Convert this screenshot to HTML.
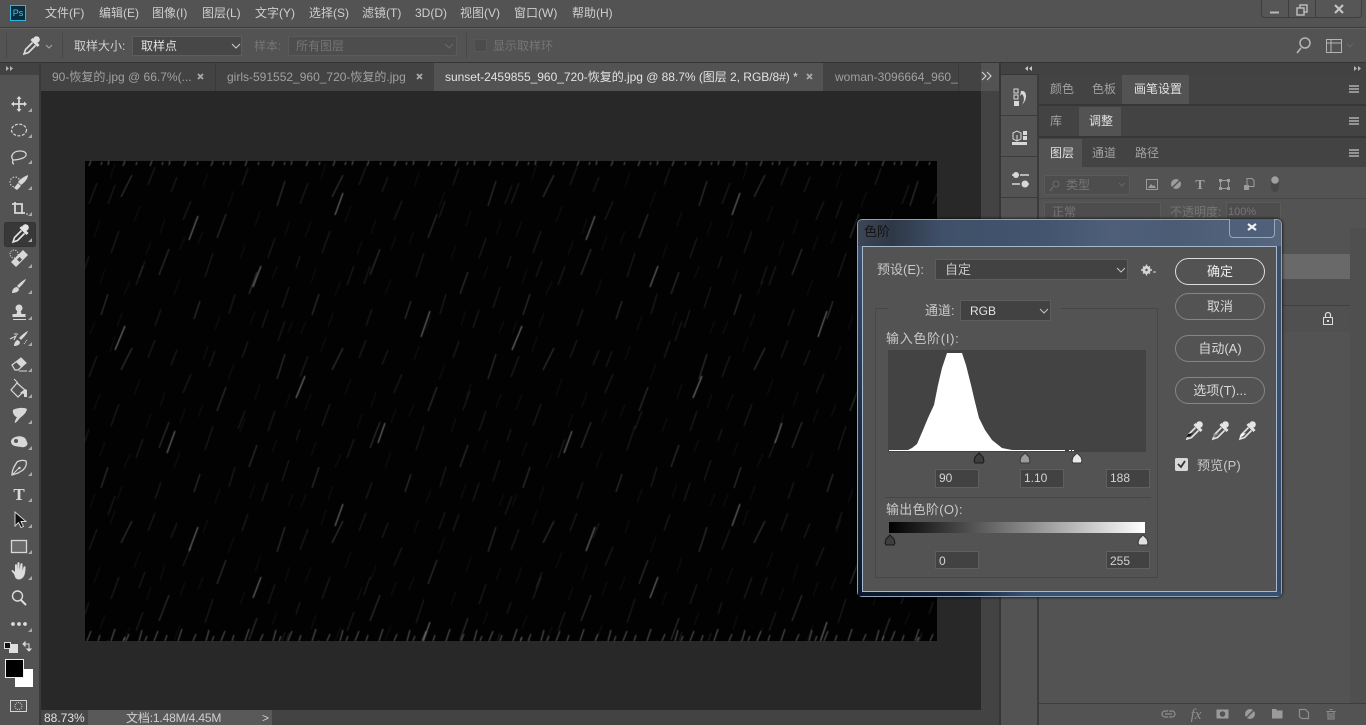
<!DOCTYPE html>
<html lang="zh"><head><meta charset="utf-8"><title>Photoshop</title>
<style>
html,body{margin:0;padding:0;width:1366px;height:725px;overflow:hidden;background:#535353}
body{position:relative;font:12px/1 "Liberation Sans","Noto Sans CJK SC",sans-serif;color:#cfcfcf}
.b{position:absolute;box-sizing:border-box}
.t{position:absolute;white-space:nowrap;line-height:14px;height:14px}
.d{color:#757575}.m{color:#a0a0a0}.w{color:#e2e2e2}
svg{position:absolute;left:0;top:0;overflow:visible}
.btn{position:absolute;box-sizing:border-box;left:1175px;width:90px;height:27px;border:1px solid #858585;border-radius:14px;text-align:center;line-height:25px;font-size:13px;color:#d8d8d8}
.inp{position:absolute;box-sizing:border-box;width:44px;height:19px;background:#424242;border:1px solid #5f5f5f;color:#d4d4d4;padding-left:3px;line-height:17px;font-size:12px}
.dl{font-size:13px;color:#c8c8c8}
.x{position:absolute;width:8px;height:8px}
</style></head><body>

<!-- top bars -->
<div class="b" style="left:0;top:27px;width:1366px;height:1px;background:#3c3c3c"></div>
<div class="b" style="left:0;top:28px;width:1366px;height:1px;background:#606060"></div>
<div class="b" style="left:0;top:62px;width:1366px;height:1px;background:#343434"></div>

<!-- Ps logo -->
<div class="b" style="left:10px;top:5px;width:16px;height:16px;background:#062c3f;border:1px solid #2fb5dc;color:#4fc8ee;font-size:9px;line-height:14px;text-align:center">Ps</div>

<div class="t" style="left:45px;top:6px">文件(F)</div>
<div class="t" style="left:99px;top:6px">编辑(E)</div>
<div class="t" style="left:152px;top:6px">图像(I)</div>
<div class="t" style="left:202px;top:6px">图层(L)</div>
<div class="t" style="left:255px;top:6px">文字(Y)</div>
<div class="t" style="left:309px;top:6px">选择(S)</div>
<div class="t" style="left:362px;top:6px">滤镜(T)</div>
<div class="t" style="left:415px;top:6px">3D(D)</div>
<div class="t" style="left:460px;top:6px">视图(V)</div>
<div class="t" style="left:514px;top:6px">窗口(W)</div>
<div class="t" style="left:572px;top:6px">帮助(H)</div>

<!-- window controls -->
<div class="b" style="left:1261px;top:-1px;width:101px;height:19px;border:1px solid #3e3e3e;border-radius:0 0 4px 4px;background:#565656"></div>
<div class="b" style="left:1288px;top:0;width:1px;height:18px;background:#3e3e3e"></div>
<div class="b" style="left:1315px;top:0;width:1px;height:18px;background:#3e3e3e"></div>

<!-- options bar -->
<div class="b" style="left:6px;top:33px;width:1px;height:25px;background:#484848"></div>
<div class="b" style="left:62px;top:33px;width:1px;height:25px;background:#484848"></div>
<div class="b" style="left:466px;top:33px;width:1px;height:25px;background:#484848"></div>
<div class="t" style="left:74px;top:39px">取样大小:</div>
<div class="b" style="left:132px;top:36px;width:110px;height:20px;background:#474747;border:1px solid #5d5d5d"></div>
<div class="t w" style="left:141px;top:39px">取样点</div>
<div class="t d" style="left:254px;top:39px">样本:</div>
<div class="b" style="left:288px;top:36px;width:169px;height:20px;background:#4d4d4d;border:1px solid #5a5a5a"></div>
<div class="t d" style="left:296px;top:39px">所有图层</div>
<div class="b" style="left:474px;top:39px;width:13px;height:13px;background:#4c4c4c;border:1px solid #585858"></div>
<div class="t d" style="left:493px;top:39px">显示取样环</div>

<!-- left toolbar head -->
<div class="b" style="left:0;top:63px;width:39px;height:12px;background:#424242"></div>
<div class="b" style="left:39px;top:63px;width:2px;height:662px;background:#3a3a3a"></div>

<!-- tabs -->
<div class="b" style="left:41px;top:63px;width:940px;height:28px;background:#434343"></div>
<div class="b" style="left:215px;top:63px;width:1px;height:28px;background:#393939"></div>
<div class="b" style="left:434px;top:63px;width:389px;height:28px;background:#535353"></div>
<div class="t m" style="left:52px;top:70px">90-恢复的.jpg @ 66.7%(...</div>
<div class="t m" style="left:227px;top:70px">girls-591552_960_720-恢复的.jpg</div>
<div class="t w" style="left:445px;top:70px;letter-spacing:-.03px">sunset-2459855_960_720-恢复的.jpg @ 88.7% (图层 2, RGB/8#) *</div>
<div class="b" style="left:823px;top:63px;width:135px;height:28px;overflow:hidden"><div class="t m" style="left:12px;top:7px">woman-3096664_960_720.jpg</div></div>
<div class="b" style="left:958px;top:63px;width:1px;height:28px;background:#393939"></div>

<!-- canvas area -->
<div class="b" style="left:41px;top:91px;width:940px;height:619px;background:#282828"></div>
<div class="b" style="left:981px;top:91px;width:18px;height:634px;background:#434343"></div>
<div class="b" style="left:999px;top:63px;width:2px;height:662px;background:#363636"></div>
<div class="b" style="left:41px;top:710px;width:940px;height:15px;background:#434343"></div>
<div class="b" style="left:41px;top:710px;width:47px;height:15px;background:#474747"></div>
<div class="b" style="left:88px;top:710px;width:184px;height:15px;background:#595959"></div>
<div class="t w" style="left:44px;top:711px">88.73%</div>
<div class="t" style="left:126px;top:711px;letter-spacing:-.15px">文档:1.48M/4.45M</div>
<div class="t" style="left:262px;top:711px;color:#cfcfcf">&gt;</div>

<!-- image with rain -->
<div class="b" style="left:85px;top:161px;width:852px;height:480px;background:#020202"></div>
<svg width="1366" height="725" viewBox="0 0 1366 725" style="filter:blur(.45px)">
<defs>
<pattern id="r1" width="211" height="173" patternUnits="userSpaceOnUse" patternTransform="translate(85 161)">
<path stroke="#fff" stroke-width=".9" stroke-opacity=".25" fill="none" d="M47 14l-11 22M141 53l-9 24M200 20l-8 25M84 88l-10 26M172 111l-8 22M23 133l-7 21M115 140l-6 18"/>
<path stroke="#fff" stroke-width=".9" stroke-opacity=".15" fill="none" d="M12 22l-8 21M70 6l-7 18M106 40l-8 19M163 7l-6 17M190 77l-7 20M34 70l-8 22M58 105l-7 19M128 92l-8 24M150 133l-6 20M204 126l-7 21M92 16l-6 15M76 148l-6 17M4 95l-6 18M183 149l-6 18"/>
<path stroke="#fff" stroke-width=".9" stroke-opacity=".08" fill="none" d="M30 3l-5 15M55 45l-6 16M80 58l-5 15M123 12l-5 14M149 30l-6 16M175 50l-5 15M15 60l-6 16M100 75l-5 14M45 120l-6 14M205 60l-5 14M160 84l-5 14M95 118l-6 16M135 155l-5 14M20 108l-5 14M192 105l-5 13M66 80l-5 14M118 70l-5 13M170 150l-5 14M37 152l-5 14M10 160l-5 13M208 160l-5 12"/>
</pattern>
<pattern id="r4" width="397" height="311" patternUnits="userSpaceOnUse" patternTransform="translate(85 161)">
<path stroke="#fff" stroke-width="1" stroke-opacity=".5" fill="none" d="M113 55l-9 24M258 32l-8 22M176 105l-8 21M345 150l-9 26M40 165l-10 24M220 215l-9 22M300 262l-7 20M90 270l-8 22"/>
<path stroke="#fff" stroke-width=".9" stroke-opacity=".14" fill="none" d="M30 24l-7 19M360 40l-6 17M200 160l-7 20M130 190l-6 16M285 105l-6 18M385 230l-7 19M160 250l-7 18M60 100l-6 16"/>
</pattern>
<pattern id="r2" width="61" height="12" patternUnits="userSpaceOnUse" patternTransform="translate(85 161)">
<path stroke="#fff" stroke-opacity=".42" stroke-width=".9" fill="none" d="M6 0l-2 5M17 1l-1 3M24 0l-1 4M40 0l-2 5M52 1l-1 3"/>
</pattern>
<pattern id="r3" width="67" height="14" patternUnits="userSpaceOnUse" patternTransform="translate(85 627)">
<path stroke="#fff" stroke-opacity=".42" stroke-width=".9" fill="none" d="M6 4l-4 10M15 8l-2 6M30 2l-4 12M44 7l-3 7M57 3l-3 11M62 9l-2 5"/>
</pattern>
</defs>
<rect x="85" y="161" width="852" height="480" fill="url(#r1)"/>
<rect x="85" y="161" width="852" height="480" fill="url(#r4)"/>
<rect x="85" y="161" width="852" height="6" fill="url(#r2)"/>
<rect x="85" y="627" width="852" height="14" fill="url(#r3)"/>
</svg>

<!-- right panels -->
<div class="b" style="left:1001px;top:63px;width:365px;height:11px;background:#424242"></div>
<div class="b" style="left:1001px;top:74px;width:37px;height:1px;background:#363636"></div>
<div class="b" style="left:1037px;top:74px;width:2px;height:651px;background:#3b3b3b"></div>
<div class="b" style="left:1001px;top:115px;width:36px;height:1px;background:#3c3c3c"></div>
<div class="b" style="left:1001px;top:156px;width:36px;height:1px;background:#3c3c3c"></div>
<div class="b" style="left:1001px;top:197px;width:36px;height:1px;background:#3c3c3c"></div>

<div class="b" style="left:1039px;top:74px;width:327px;height:30px;background:#434343"></div>
<div class="b" style="left:1122px;top:75px;width:67px;height:29px;background:#535353"></div>
<div class="t m" style="left:1050px;top:82px">颜色</div>
<div class="t m" style="left:1092px;top:82px">色板</div>
<div class="t w" style="left:1134px;top:82px">画笔设置</div>
<div class="b" style="left:1039px;top:104px;width:327px;height:2px;background:#373737"></div>
<div class="b" style="left:1039px;top:106px;width:327px;height:30px;background:#434343"></div>
<div class="b" style="left:1079px;top:107px;width:42px;height:29px;background:#535353"></div>
<div class="t m" style="left:1050px;top:114px">库</div>
<div class="t w" style="left:1089px;top:114px">调整</div>
<div class="b" style="left:1039px;top:136px;width:327px;height:2px;background:#373737"></div>
<div class="b" style="left:1039px;top:138px;width:327px;height:29px;background:#434343"></div>
<div class="b" style="left:1039px;top:139px;width:43px;height:28px;background:#535353"></div>
<div class="t w" style="left:1050px;top:146px">图层</div>
<div class="t m" style="left:1092px;top:146px">通道</div>
<div class="t m" style="left:1135px;top:146px">路径</div>
<div class="b" style="left:1039px;top:198px;width:327px;height:1px;background:#484848"></div>

<div class="b" style="left:1044px;top:175px;width:86px;height:20px;background:#4d4d4d;border:1px solid #5a5a5a;border-radius:2px"></div>
<div class="t d" style="left:1066px;top:178px">类型</div>
<div class="b" style="left:1044px;top:202px;width:117px;height:20px;background:#4d4d4d;border:1px solid #5a5a5a"></div>
<div class="t d" style="left:1052px;top:205px">正常</div>
<div class="t d" style="left:1170px;top:205px">不透明度:</div>
<div class="b" style="left:1226px;top:202px;width:55px;height:20px;background:#4d4d4d;border:1px solid #5a5a5a"></div>
<div class="t d" style="left:1228px;top:205px;font-size:11px">100%</div>

<!-- layer rows -->
<div class="b" style="left:1039px;top:254px;width:311px;height:25px;background:#696969"></div>
<div class="b" style="left:1039px;top:279px;width:311px;height:26px;background:#4f4f4f"></div>
<div class="b" style="left:1039px;top:305px;width:311px;height:1px;background:#404040"></div>
<div class="b" style="left:1039px;top:306px;width:311px;height:26px;background:#505050"></div>
<div class="b" style="left:1350px;top:228px;width:16px;height:475px;background:#4f4f4f"></div>
<div class="b" style="left:1039px;top:703px;width:327px;height:1px;background:#3e3e3e"></div>

<!-- base icons -->
<svg width="1366" height="725" viewBox="0 0 1366 725" fill="none" stroke="#cfcfcf">
<defs>
<g id="ed">
<path d="M1.500-7l7 7" stroke="currentColor" stroke-width="3" fill="none"/>
<circle cx="6.500" cy="-6.500" r="3.300" fill="currentColor" stroke="none"/>
<path d="M2.500-3.500l-7 7-1.500 4.500 4.500-1.500 7-7" stroke="currentColor" stroke-width="1.600" fill="none"/>
</g>
<path id="tri" d="M0 4h4v-4z" fill="#a9a9a9" stroke="none"/>
<g id="burger"><path d="M0 0h10M0 3h10M0 6h10" stroke="#c4c4c4" stroke-width="1.200"/></g>
</defs>

<!-- window glyphs -->
<path d="M1270 12.500h9" stroke="#b8b8b8" stroke-width="2"/>
<path d="M1297 8h7v7h-7zM1300 8v-3h7v7h-3" stroke="#b8b8b8" stroke-width="1.500"/>
<path d="M1335 5l8 8M1343 5l-8 8" stroke="#c4c4c4" stroke-width="2.200"/>

<!-- tab close marks -->
<g stroke="#a8a8a8" stroke-width="1.800">
<path d="M198 74l5 5M203 74l-5 5"/>
<path d="M417 74l5 5M422 74l-5 5"/>
<path d="M807 74l5 5M812 74l-5 5"/>
</g>

<!-- options -->
<use href="#ed" x="30" y="46" color="#dedede"/>
<path d="M46 45l3 3 3-3" stroke="#a5a5a5"/>
<path d="M232 44l4 4 4-4" stroke="#cfcfcf"/>
<path d="M445 44l4 4 4-4" stroke="#696969"/>
<circle cx="1305" cy="43" r="5" stroke="#b5b5b5" stroke-width="1.500"/><path d="M1301 48l-4 5" stroke="#b5b5b5" stroke-width="1.700"/>
<path d="M1326.500 39.500h15v13h-15zM1331 40v12M1327 43h14" stroke="#b5b5b5"/>
<path d="M1347 44l3 3 3-3" stroke="#666"/>

<!-- double arrows -->
<path d="M6 66l3 2.500-3 2.500zM10 66l3 2.500-3 2.500z" fill="#b5b5b5" stroke="none"/>
<path d="M1032 66l-3 2.500 3 2.500zM1028 66l-3 2.500 3 2.500z" fill="#c8c8c8" stroke="none"/>
<path d="M1354 66l3 2.500-3 2.500zM1358 66l3 2.500-3 2.500z" fill="#b5b5b5" stroke="none"/>
<path d="M982 72l4 4-4 4M987 72l4 4-4 4" stroke="#cfcfcf" stroke-width="1.200"/>

<!-- burgers -->
<use href="#burger" x="1349" y="86"/><use href="#burger" x="1349" y="118"/><use href="#burger" x="1349" y="150"/>

<!-- strip icons -->
<path d="M1014 89h4v4h-4zM1014 95h4v4h-4z" stroke="#d8d8d8"/><path d="M1014 101h5v5h-5z" fill="#d8d8d8" stroke="none"/>
<path d="M1021 91c6-1 7 8 1 14 3-5 2-9 0-11l-2 2z" fill="#d8d8d8" stroke="none"/>
<path d="M1013 133l4-2 4 2v6l-4 2-4-2zM1017 135v6" stroke="#d8d8d8"/>
<path d="M1023 131h4v4h-4zM1023 136h4v4h-4zM1012 142h15v3h-15z" fill="#d8d8d8" stroke="none"/>
<path d="M1012 175h7M1020 175h9M1012 184h8M1023 184h6" stroke="#d8d8d8" stroke-width="1.500"/>
<circle cx="1016" cy="175" r="3" fill="#d8d8d8" stroke="none"/><circle cx="1025" cy="184" r="3.500" fill="#d8d8d8" stroke="none"/>

<!-- layer filter icons -->
<circle cx="1056" cy="184" r="3" stroke="#6c6c6c"/><path d="M1053 187l-3 4" stroke="#6c6c6c" stroke-width="1.300"/>
<path d="M1125 183l-3 3-3-3" stroke="#666"/>
<path d="M1146.500 179.500h11v10h-11z" stroke="#9c9c9c"/><path d="M1148 188l3-4 2 2 1-1 2 3z" fill="#9c9c9c" stroke="none"/>
<circle cx="1176" cy="184" r="5" fill="#9c9c9c" stroke="none"/><path d="M1172 188l8-8" stroke="#535353" stroke-width="1.500"/>
<text x="1200" y="189" font-family="Liberation Serif" font-size="14" font-weight="bold" fill="#a0a0a0" stroke="none" text-anchor="middle">T</text>
<path d="M1220.500 180.500h8v8h-8z" stroke="#9c9c9c"/><path d="M1219 179h3v3h-3zM1227 179h3v3h-3zM1219 187h3v3h-3zM1227 187h3v3h-3z" fill="#9c9c9c" stroke="none"/>
<path d="M1247 178.500h5l2 2v6h-7z" stroke="#9c9c9c"/><path d="M1244 185h5v5h-5z" fill="#9c9c9c" stroke="none"/>
<rect x="1271" y="176" width="8" height="16" rx="4" fill="#474747" stroke="none"/><circle cx="1275" cy="180" r="3.800" fill="#a0a0a0" stroke="none"/>

<!-- lock -->
<path d="M1325.500 317.500v-2.500a2.500 2.500 0 0 1 5 0v2.500" stroke="#dcdcdc" stroke-width="1.200"/>
<path d="M1323.500 317.500h9v7h-9z" stroke="#dcdcdc"/><path d="M1327 320h2v2h-2z" fill="#dcdcdc" stroke="none"/>

<!-- layer bottom icons -->
<g stroke="#8e8e8e">
<path d="M1168 711h-3a3 3 0 0 0 0 6h3M1169 711h3a3 3 0 0 1 0 6h-3M1165 714h7" stroke-width="1.200"/>
<rect x="1216.500" y="709.500" width="12" height="9" fill="#9b9b9b" stroke="none"/>
<path d="M1272 709h4l1 1.500h5.500v8h-10.500z" fill="#9b9b9b" stroke="none"/>
<path d="M1299.500 709.500h6l3 3v6h-7l-2-2z" stroke-width="1.200"/>
<path d="M1326.500 711.500h9M1328 711.500v7.500h6v-7.500M1329.500 709.500h3M1330 713v5M1332 713v5" stroke-width="1.100"/>
</g>
<circle cx="1222.500" cy="714" r="2.800" fill="#535353" stroke="none"/>
<circle cx="1250" cy="714" r="5" fill="#9b9b9b" stroke="none"/><path d="M1246 718l8-8" stroke="#535353" stroke-width="1.400"/>
<text x="1196" y="719" font-family="Liberation Serif" font-size="15" font-style="italic" fill="#8e8e8e" stroke="none" text-anchor="middle">fx</text>

<!-- tools -->
<rect x="4.500" y="222.500" width="31" height="24" rx="2" fill="#383838" stroke="#333"/>
<g stroke="#d8d8d8" fill="#d8d8d8">
<!-- move -->
<path d="M19 97v14M12 104h14" stroke-width="1.800"/><path d="M19 96l-2.500 3h5zM19 112l-2.500-3h5zM11 104l3-2.500v5zM27 104l-3-2.500v5z" stroke="none"/>
<!-- marquee -->
<ellipse cx="19" cy="130" rx="7.500" ry="5.800" fill="none" stroke-dasharray="3 1.500" stroke-width="1.200"/>
<!-- lasso -->
<path d="M13 160c-3-4 0-9 7-9s8 5 3 7-9 2-10 2c-1 2 0 4 1 4" fill="none" stroke-width="1.300"/>
<!-- quick select -->
<circle cx="15" cy="182" r="5" fill="none" stroke-dasharray="1.500 1.500" stroke-width="1.100"/>
<path d="M28 175c0 4-4 8-7 10l-3-3c2-3 7-6 10-7z" stroke="none"/><path d="M14 188l4-5 3 3-4 4z" stroke="none"/>
<!-- crop -->
<path d="M15 202v11h10M12 204h10v10" fill="none" stroke-width="1.800"/><path d="M26 214h2" stroke-width="1"/>
<!-- heal -->
<path d="M11 263l12-12 5 5-12 12z" stroke="none" transform="translate(0 -1)"/><circle cx="14" cy="254" r="4" fill="none" stroke-dasharray="1.200 1.300"/><path d="M19.500 257l2.500 2.500-2.500 2.500-2.500-2.500z" fill="#535353" stroke="none"/>
<!-- brush -->
<path d="M26 279c-1 3-5 7-7 9l-2-2c2-2 6-6 9-7z" stroke="none"/><path d="M12 293c0-3 2-6 5-6l2 2c0 3-4 4-7 4z" stroke="none"/>
<!-- stamp -->
<circle cx="19" cy="308" r="3.500" stroke="none"/><path d="M17.500 310h3l1 4h4v3h-13v-3h4z" stroke="none"/><path d="M13 319.500h13" stroke-width="1"/>
<!-- history brush -->
<path d="M28 331c-1 3-5 7-7 9l-2-2c2-2 6-6 9-7zM14 346c0-3 2-6 4-6l2 2c0 3-3 4-6 4z" stroke="none"/><path d="M10 339l6-3-2 4M14 334h4" fill="none"/><path d="M24 344l3-4" stroke-dasharray="1 1" fill="none"/>
<!-- eraser -->
<path d="M12 365l9-7 5 5-8 7h-3z" fill="none" stroke-width="1.200"/><path d="M16 362l5-4 5 5-5 4z" stroke="none"/><path d="M19 371h8" stroke-width="1"/>
<!-- bucket -->
<path d="M17 383l8 7-7 7-7-7z" fill="none" stroke-width="1.200"/><path d="M14 379l4 4" fill="none"/><path d="M20 393l5-4 2 1v7h-3v-3z" stroke="none"/>
<!-- smudge -->
<path d="M13 410c3-2 11-3 14-1-1 5-5 7-7 9s-3 4-5 5c-1-1 1-4 2-6-2 0-5-4-4-7z" stroke="none"/>
<!-- dodge -->
<path d="M11 441c1-4 8-6 12-4 3 1 3 3 4 5 2 3-2 6-6 5s-10 0-10-6z" stroke="none"/><circle cx="16" cy="441" r="2" fill="#535353" stroke="none"/>
<!-- pen -->
<path d="M26 461c1 3 0 6-3 9l-5 3-6 2c0-3 1-6 2-8l3-5c3-2 6-2 9-1z" fill="none" stroke-width="1.300"/><path d="M13 474l6-6" fill="none"/><circle cx="19.500" cy="468" r="1.200" stroke="none"/>
</g>
<text x="19" y="500" font-family="Liberation Serif" font-size="17" font-weight="bold" fill="#dcdcdc" stroke="none" text-anchor="middle">T</text>
<path d="M15 512l0 14 3.500-3.500 2.500 5 2.500-1-2.500-5h5z" fill="#111" stroke="#dcdcdc" stroke-width=".9"/>
<rect x="11.500" y="540.500" width="15" height="12" fill="#6a6a6a" stroke="#d8d8d8" stroke-width="1.300"/>
<path d="M14 574c-2-2-3-4-2-4s2 1 3 2l0-7c0-1 2-1 2 0l0 5 .5-7c0-1 2-1 2 0l0 7 1-6c0-1 2-1 2 0l0 7 1-4c.5-1 2-1 2 0 0 4-.5 9-3 11s-5 2-7 0z" fill="#dcdcdc" stroke="none"/>
<circle cx="17.500" cy="596" r="5" stroke="#dcdcdc" stroke-width="1.400"/><path d="M21 600l5 5" stroke="#dcdcdc" stroke-width="2"/>
<circle cx="13" cy="624" r="1.900" fill="#dcdcdc" stroke="none"/><circle cx="19" cy="624" r="1.900" fill="#dcdcdc" stroke="none"/><circle cx="25" cy="624" r="1.900" fill="#dcdcdc" stroke="none"/>
<use href="#tri" x="28" y="108"/><use href="#tri" x="28" y="134"/><use href="#tri" x="28" y="160"/><use href="#tri" x="28" y="186"/><use href="#tri" x="28" y="212"/><use href="#tri" x="28" y="238"/><use href="#tri" x="28" y="264"/><use href="#tri" x="28" y="290"/><use href="#tri" x="28" y="316"/><use href="#tri" x="28" y="342"/><use href="#tri" x="28" y="368"/><use href="#tri" x="28" y="394"/><use href="#tri" x="28" y="420"/><use href="#tri" x="28" y="446"/><use href="#tri" x="28" y="472"/><use href="#tri" x="28" y="498"/><use href="#tri" x="28" y="524"/><use href="#tri" x="28" y="550"/><use href="#tri" x="28" y="576"/><use href="#tri" x="28" y="628"/>
<use href="#ed" x="19" y="234" color="#e4e4e4"/>
<!-- swatches -->
<path d="M9 644h9v9h-9z" fill="#e0e0e0" stroke="none"/>
<path d="M4.500 642.500h6v6h-6z" fill="#111" stroke="#dcdcdc"/>
<path d="M23 644h6v7M23 644l2-2v4zM29 651l-2-2h4z" stroke="#dcdcdc" stroke-width="1"/>
<rect x="15" y="669" width="18" height="18" fill="#fff" stroke="none"/>
<rect x="5.500" y="659.500" width="18" height="18" fill="#000" stroke="#eee"/>
<rect x="10.500" y="700.500" width="16" height="11" stroke="#d4d4d4"/><circle cx="18.500" cy="706" r="3.500" stroke="#d4d4d4" stroke-dasharray="1 1"/>
</svg>

<!-- DIALOG -->
<div class="b" style="left:857px;top:219px;width:425px;height:378px;border:1px solid #8fa2b9;border-radius:5px;background:linear-gradient(180deg,#3e4f68 0,#364e70 40%,#33496a 100%);box-shadow:0 0 3px #000"></div>
<div class="b" style="left:858px;top:220px;width:423px;height:26px;border-radius:4px 4px 0 0;background:linear-gradient(90deg,#3c4654 0,#2e3847 8%,#3f5069 20%,#43556f 45%,#4e5f7a 60%,#4b5c75 75%,#56667e 100%)"></div>
<div class="b" style="left:858px;top:246px;width:5px;height:350px;background:linear-gradient(180deg,#3c5272,#1a2a42 55%,#0c1828)"></div>
<div class="b" style="left:858px;top:591px;width:423px;height:5px;background:linear-gradient(90deg,#0c1828 0,#12233c 25%,#3a5071 40%,#3a5071 100%)"></div>
<div class="b" style="left:862px;top:246px;width:415px;height:346px;background:#535353;border:1px solid #a9b9cc"></div>
<div class="t" style="left:864px;top:225px;font-size:13px;color:#141414">色阶</div>
<div class="b" style="left:1229px;top:219px;width:46px;height:19px;border:1px solid #98a8bb;border-top:0;border-radius:0 0 4px 4px;background:#4f607a"></div>

<div class="t dl" style="left:877px;top:263px">预设(E):</div>
<div class="b" style="left:935px;top:259px;width:193px;height:21px;background:#424242;border:1px solid #5d5d5d"></div>
<div class="t dl w" style="left:945px;top:263px">自定</div>

<div class="btn" style="top:258px;border:1.500px solid #dcdcdc;color:#ececec">确定</div>
<div class="btn" style="top:293px">取消</div>
<div class="btn" style="top:335px">自动(A)</div>
<div class="btn" style="top:377px">选项(T)...</div>

<!-- group box -->
<div class="b" style="left:875px;top:308px;width:283px;height:270px;border:1px solid #474747"></div>
<div class="b" style="left:888px;top:300px;width:173px;height:18px;background:#535353"></div>
<div class="t dl" style="left:925px;top:304px">通道:</div>
<div class="b" style="left:960px;top:300px;width:91px;height:21px;background:#424242;border:1px solid #5d5d5d"></div>
<div class="t w" style="left:970px;top:304px">RGB</div>

<div class="t dl" style="left:886px;top:332px;letter-spacing:.7px">输入色阶(I):</div>
<div class="b" style="left:888px;top:350px;width:258px;height:102px;background:#434343"></div>
<svg width="1366" height="725" viewBox="0 0 1366 725" fill="none">
<path d="M889 451V450H908L912 448 917 444 923 430 928 418 934 405 938 385 942 368 947 353H962L966 365 971 385 975 402 979 418 985 430 992 440 1002 448 1012 450H1065V451Z" fill="#fff"/>
<path d="M1069 450.500h2M1072 450.500h2" stroke="#fff"/>
<path d="M979 453l4 4 1 4-1 2h-8l-1-2 1-4z" fill="#3e3e3e" stroke="#181818"/>
<path d="M1025 453l4 4 1 4-1 2h-8l-1-2 1-4z" fill="#9c9c9c" stroke="#3a3a3a"/>
<path d="M1077 453l4 4 1 4-1 2h-8l-1-2 1-4z" fill="#eaeaea" stroke="#3a3a3a"/>
<path d="M890 535l4 4 1 4-1 2h-8l-1-2 1-4z" fill="#3e3e3e" stroke="#181818"/>
<path d="M1143 535l4 4 1 4-1 2h-8l-1-2 1-4z" fill="#e0e0e0" stroke="#3a3a3a"/>
<!-- chevrons -->
<path d="M1117 268l4 4 4-4" stroke="#c4c4c4"/>
<path d="M1040 309l4 4 4-4" stroke="#c4c4c4"/>
<!-- gear -->
<circle cx="1146.500" cy="270" r="3" stroke="#d4d4d4" stroke-width="2.200"/>
<path d="M1146.500 264.500v11M1141 270h11M1143 266.500l7 7M1150 266.500l-7 7" stroke="#d4d4d4" stroke-width="1.400"/>
<circle cx="1146.500" cy="270" r="1.200" fill="#535353"/>
<path d="M1153 272h3" stroke="#d4d4d4"/>
<!-- dialog close x -->
<path d="M1248 224l8 6M1256 224l-8 6" stroke="#f2f2f2" stroke-width="2.200"/>
<!-- dialog eyedroppers -->
<use href="#ed" x="1193" y="431" color="#e4e4e4"/>
<path d="M1188 434l-1.500 3.500 3.500-1.500 3-3z" fill="#111"/>
<use href="#ed" x="1219" y="431" color="#e4e4e4"/>
<path d="M1214 434l-1.500 3.500 3.500-1.500 3-3z" fill="#8a8a8a"/>
<use href="#ed" x="1246" y="431" color="#e4e4e4"/>
<path d="M1241 434l-1.500 3.500 3.500-1.500 3-3z" fill="#fff"/>
<!-- checkbox -->
<rect x="1175" y="458" width="13" height="13" rx="1.500" fill="#d8d8d8"/>
<path d="M1178 464l3 3 4-6" stroke="#333" stroke-width="1.800"/>
</svg>

<div class="inp" style="left:935px;top:469px">90</div>
<div class="inp" style="left:1020px;top:469px">1.10</div>
<div class="inp" style="left:1106px;top:469px">188</div>
<div class="b" style="left:885px;top:497px;width:266px;height:1px;background:#464646"></div>
<div class="t dl" style="left:886px;top:503px;letter-spacing:.3px">输出色阶(O):</div>
<div class="b" style="left:889px;top:522px;width:256px;height:11px;background:linear-gradient(90deg,#000,#fff)"></div>
<div class="inp" style="left:935px;top:551px;height:18px;line-height:18px">0</div>
<div class="inp" style="left:1106px;top:551px;height:18px;line-height:18px">255</div>
<div class="t dl" style="left:1197px;top:459px;letter-spacing:.1px">预览(P)</div>

</body></html>
